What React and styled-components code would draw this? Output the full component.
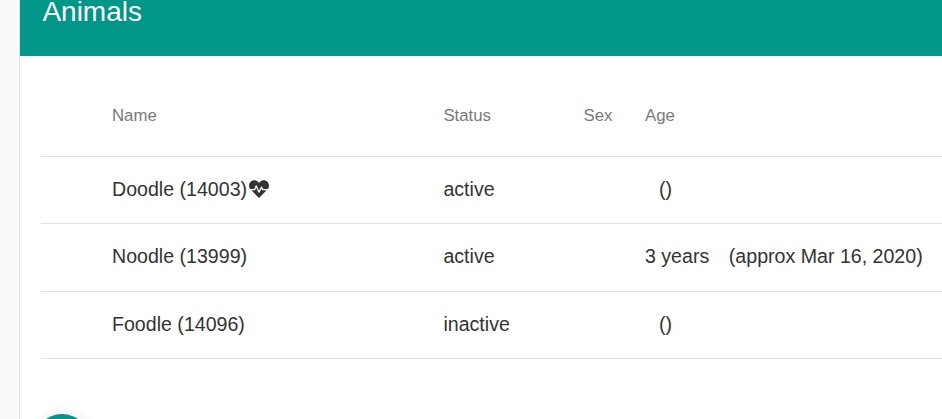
import React from "react";
import styled, { createGlobalStyle } from "styled-components";
import { FaHeartbeat } from "react-icons/fa";

const Global = createGlobalStyle`
  html, body { margin: 0; padding: 0; height: 100%; overflow: hidden; background: #fff; }
  body { font-family: "Liberation Sans", Arial, sans-serif; }
  #root { height: 100%; }
`;

const Page = styled.div`
  display: flex;
  width: 942px;
  height: 419px;
  overflow: hidden;
`;

const Sidebar = styled.aside`
  flex: 0 0 19px;
  background: #fafafa;
  border-right: 1px solid #e4e4e4;
  box-sizing: content-box;
`;

const Main = styled.main`
  position: relative;
  flex: 1;
  min-width: 0;
  background: #fff;
`;

const Header = styled.header`
  display: flex;
  align-items: flex-end;
  height: 56px;
  padding: 0 22.4px 24px;
  box-sizing: border-box;
  background: #009688;
  overflow: hidden;
`;

const Title = styled.h1`
  margin: 0;
  font-size: 28px;
  line-height: 40px;
  font-weight: 400;
  color: #fff;
  white-space: nowrap;
`;

const Table = styled.table`
  width: 901px;
  margin: 22px 0 0 21px;
  table-layout: fixed;
  border-collapse: collapse;
`;

const HeadRow = styled.tr`
  height: 78px;
  border-bottom: 1px solid #e0e0e0;
`;

const Row = styled.tr`
  height: ${(p) => p.$height}px;
  border-bottom: 1px solid #e0e0e0;
`;

const Th = styled.th`
  padding: 0 0 2px ${(p) => p.$inset || 0}px;
  font-size: 16.8px;
  font-weight: 400;
  text-align: left;
  color: #7a7a7a;
  white-space: nowrap;
`;

const Td = styled.td`
  padding: 0 0 ${(p) => p.$lift || 0}px ${(p) => p.$inset || 0}px;
  font-size: 19.6px;
  color: #333;
  white-space: nowrap;
`;

const Heart = styled(FaHeartbeat)`
  width: 20px;
  height: 20px;
  margin-left: 2px;
  vertical-align: -3px;
  color: #333;
`;

const AgeValue = styled.span`
  display: inline-block;
  margin-right: ${(p) => (p.$empty ? 14 : 19.6)}px;
`;

const Fab = styled.button`
  position: absolute;
  left: 14px;
  top: 414px;
  width: 56px;
  height: 56px;
  padding: 0;
  border: 0;
  border-radius: 50%;
  background: #009688;
  box-shadow: 0 3px 14px rgba(0, 0, 0, 0.18);
`;

const animals = [
  { name: "Doodle (14003)", heart: true, status: "active", age: "", approx: "()", height: 67, lift: 0 },
  { name: "Noodle (13999)", status: "active", age: "3 years", approx: "(approx Mar 16, 2020)", height: 68, lift: 2 },
  { name: "Foodle (14096)", status: "inactive", age: "", approx: "()", height: 67, lift: 0 },
];

export default function App() {
  return (
    <>
      <Global />
      <Page>
        <Sidebar />
        <Main>
          <Header>
            <Title>Animals</Title>
          </Header>
          <Table>
            <colgroup>
              <col style={{ width: 402.4 }} />
              <col style={{ width: 140.2 }} />
              <col style={{ width: 61.4 }} />
              <col />
            </colgroup>
            <thead>
              <HeadRow>
                <Th $inset={71}>Name</Th>
                <Th>Status</Th>
                <Th>Sex</Th>
                <Th>Age</Th>
              </HeadRow>
            </thead>
            <tbody>
              {animals.map((a) => (
                <Row key={a.name} $height={a.height}>
                  <Td $inset={71} $lift={a.lift}>
                    {a.name}
                    {a.heart && <Heart />}
                  </Td>
                  <Td $lift={a.lift}>{a.status}</Td>
                  <Td $lift={a.lift} />
                  <Td $lift={a.lift}>
                    <AgeValue $empty={!a.age}>{a.age}</AgeValue>
                    {a.approx}
                  </Td>
                </Row>
              ))}
            </tbody>
          </Table>
          <Fab aria-label="Add" />
        </Main>
      </Page>
    </>
  );
}
